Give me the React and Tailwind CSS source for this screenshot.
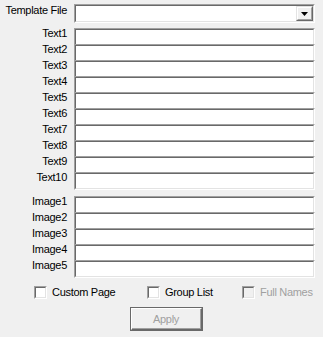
import React from 'react'

const textFields = ['Text1', 'Text2', 'Text3', 'Text4', 'Text5', 'Text6', 'Text7', 'Text8', 'Text9', 'Text10']
const imageFields = ['Image1', 'Image2', 'Image3', 'Image4', 'Image5']

function Field({ label, last }) {
  return (
    <div className="flex pr-[8px]">
      <div className="w-[67px] -mt-[3px] text-right leading-[16px] shrink-0">{label}</div>
      <div
        className={
          'ml-[7px] flex-1 border-t border-l border-r border-t-[#a0a0a0] border-l-[#a0a0a0] border-r-white ' +
          (last ? 'border-b border-b-white h-[18px]' : 'h-[16px]')
        }
      >
        <div
          className={
            'h-full bg-white border-t border-l border-r border-t-[#696969] border-l-[#696969] border-r-[#e3e3e3] ' +
            (last ? 'border-b border-b-[#e3e3e3]' : '')
          }
        />
      </div>
    </div>
  )
}

function Checkbox({ label, disabled, width }) {
  return (
    <div className={'flex items-start shrink-0 ' + width}>
      <div className="mt-[2px] w-[13px] h-[13px] border border-t-[#a0a0a0] border-l-[#a0a0a0] border-b-white border-r-white">
        <div
          className={
            'w-full h-full border border-t-[#696969] border-l-[#696969] border-b-[#e3e3e3] border-r-[#e3e3e3] ' +
            (disabled ? 'bg-[#f0f0f0]' : 'bg-white')
          }
        />
      </div>
      <span className={'ml-[5px] leading-[16px] ' + (disabled ? 'text-[#a0a0a0]' : '')}>{label}</span>
    </div>
  )
}

export default function App() {
  return (
    <div
      className="w-[323px] h-[337px] bg-[#f0f0f0] text-black text-[11px] tracking-[-0.3px] overflow-hidden"
      style={{ fontFamily: '"Liberation Sans", Arial, sans-serif' }}
    >
      {/* template combo */}
      <div className="flex pr-[8px] pt-[4px]">
        <div className="w-[67px] -mt-[2px] text-right leading-[16px] shrink-0">Template File</div>
        <div className="ml-[7px] flex-1 h-[19px] border border-t-[#a0a0a0] border-l-[#a0a0a0] border-b-white border-r-white">
          <div className="h-full bg-white flex justify-end border border-t-[#696969] border-l-[#696969] border-b-[#e3e3e3] border-r-[#e3e3e3]">
            <div className="w-[17px] h-full border border-t-[#e3e3e3] border-l-[#e3e3e3] border-b-[#696969] border-r-[#696969]">
              <div className="w-full h-full bg-[#f0f0f0] flex items-center justify-center border border-t-white border-l-white border-b-[#a0a0a0] border-r-[#a0a0a0]">
                <svg width="7" height="4" viewBox="0 0 7 4" className="mt-px">
                  <polygon points="0,0 7,0 3.5,4" fill="#000" />
                </svg>
              </div>
            </div>
          </div>
        </div>
      </div>

      <div className="mt-[5px] flex flex-col">
        {textFields.map((t, i) => (
          <Field key={t} label={t} last={i === textFields.length - 1} />
        ))}
      </div>

      <div className="mt-[6px] flex flex-col">
        {imageFields.map((t, i) => (
          <Field key={t} label={t} last={i === imageFields.length - 1} />
        ))}
      </div>

      <div className="mt-[6px] flex pl-[34px]">
        <Checkbox label="Custom Page" width="w-[113px]" />
        <Checkbox label="Group List" width="w-[95px]" />
        <Checkbox label="Full Names" disabled width="" />
      </div>

      <div className="mt-[7px] pl-[130px]">
        <div className="w-[73px] h-[24px] border border-[#696969]">
          <div className="w-full h-full border border-t-white border-l-white border-b-[#696969] border-r-[#696969]">
            <div className="w-full h-full flex items-center justify-center border-b border-r border-b-[#a0a0a0] border-r-[#a0a0a0] text-[#a0a0a0] leading-[16px]">
              Apply
            </div>
          </div>
        </div>
      </div>
    </div>
  )
}
